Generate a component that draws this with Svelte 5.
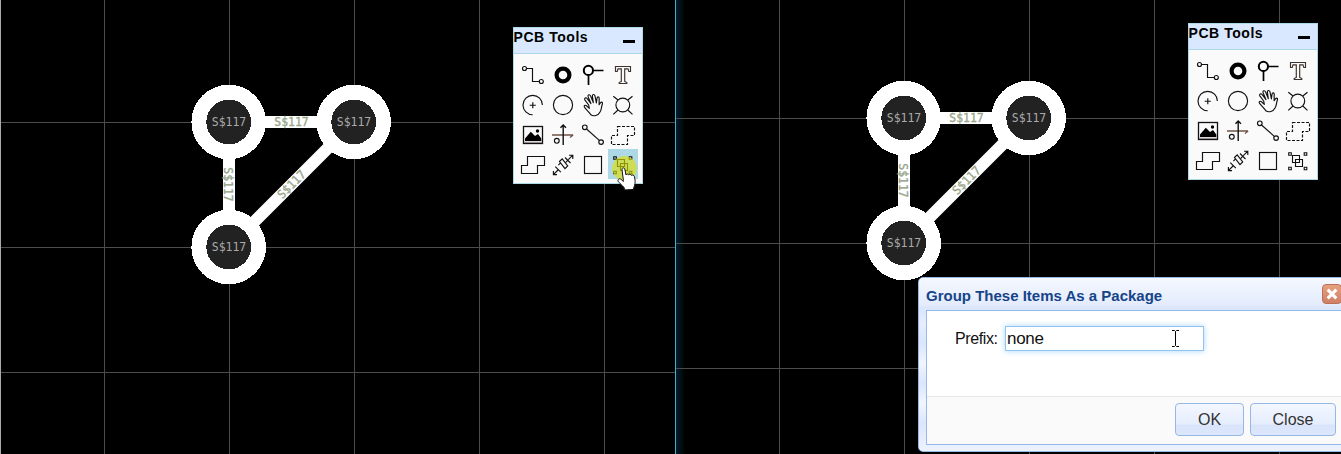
<script>
  const pads = [[229, 122], [354, 122], [229, 247]];
  const traces = [
    { x: 291.5, y: 122, a: 0 },
    { x: 228, y: 184.5, a: 90 },
    { x: 291.5, y: 184.5, a: -45 }
  ];
  const panes = [
    { id: 'before', dy: 0, active: true },
    { id: 'after', dy: -4, active: false }
  ];
  const tools = ['track', 'pad', 'via', 'text', 'arc', 'circle', 'move', 'hole', 'image', 'origin', 'line', 'region', 'solid', 'measure', 'rect', 'group'];
</script>

{#snippet icon(name)}
  <svg class="icon" viewBox="0 0 30 30" fill="none" stroke="#111" stroke-width="1.15">
    {#if name === 'track'}
      <path d="M8.5 9.5H14.5V22.5H21" /><circle cx="6.5" cy="9.5" r="2" /><circle cx="23.3" cy="22.5" r="2" />
    {:else if name === 'pad'}
      <circle cx="15" cy="16" r="6.4" stroke="#000" stroke-width="4.2" />
    {:else if name === 'via'}
      <g stroke="#000" stroke-width="2"><circle cx="10.4" cy="11.4" r="4.6" /><path d="M15 11.5H25.5M10.5 16V26" stroke-width="1.7" /></g>
    {:else if name === 'text'}
      <path stroke="#3d332c" d="M7.5 7.5H22.5V12.5H20.8L20 9.8H16.7V22.5L18.8 23.5V24.5H11.2V23.5L13.3 22.5V9.8H10L9.2 12.5H7.5Z" />
    {:else if name === 'arc'}
      <path d="M24.4 16A9.7 9.7 0 1 0 14.7 25.7M11.7 16.2H17.8M14.8 13.2V19.2" />
    {:else if name === 'circle'}
      <circle cx="15" cy="16" r="9.6" />
    {:else if name === 'move'}
      <path stroke-linejoin="round" d="M12.8 25.7C11.2 23.2 8.8 21.5 6.8 18.7C5.2 16.4 7.2 15.6 8.8 17L11.3 19.3L10.7 16L7 11.1C5.8 8.9 8 8 9.2 9.7L13 14.6L10.2 8C9.4 5.6 11.6 4.9 12.6 7L15.3 13.6L14.4 7.3C14.2 5.1 16.4 4.8 17 7L18.4 13.9L19 9.2C19.4 7.2 21.3 7.6 21.2 9.5L21.1 15.7L22.4 13.9C23.6 12.3 25 13.3 24.3 15.2C23.2 18 23.7 20.5 22.2 22.7C20.2 26.8 15.6 27.7 12.8 25.7Z" />
    {:else if name === 'hole'}
      <circle cx="14.8" cy="16" r="6.9" /><path d="M5.3 7.3L10 11M24.5 7.3L19.8 11M5.3 25.3L10 21M24.5 25.3L19.8 21" />
    {:else if name === 'image'}
      <rect x="5.5" y="7.5" width="19" height="17" stroke-width="1.3" />
      <path fill="#000" stroke="none" d="M7 19.5L12.8 12.8L17 17L20 15L23.3 19.5V22H7Z" /><circle cx="19.5" cy="12" r="1.7" fill="#000" stroke="none" />
      <path d="M6 23.3H24" stroke="#91888c" />
    {:else if name === 'origin'}
      <path stroke="#6f5445" stroke-width="1.3" d="M4 16H25M22 18.5L25.2 16" /><path stroke-width="1.4" d="M15.2 26V6M12.5 8.8L15.2 6L18 8.8" /><circle cx="8.8" cy="21.8" r="2.4" />
    {:else if name === 'line'}
      <path d="M8.5 10L21.3 21.4" /><circle cx="6.8" cy="8.3" r="2.3" /><circle cx="23.1" cy="23.1" r="2.3" />
    {:else if name === 'region'}
      <path stroke-dasharray="3 1.5" d="M9.5 7.5H26.5V16.5H19.5V25.5H3.5V16.5H9.5Z" />
    {:else if name === 'solid'}
      <path d="M9.5 7.5H26.5V16.5H19.5V24.5H3.5V16.5H9.5Z" />
    {:else if name === 'measure'}
      <path d="M5.4 25.6L10 21M20.3 10.7L24.8 6.2M5.4 22V25.6H9M21 6.2H24.8V10M7.3 17.7L12.8 23.2M17 8.5L22.5 14M10.4 16.1L12.3 14.2M17.8 13.4L19.5 11.7M11.5 12.5L14.2 9.8L19.7 17L17 19.7Z" />
    {:else if name === 'rect'}
      <rect x="6.5" y="7.5" width="17" height="17" />
    {:else}
      <path d="M5.7 7.7H8.3V10.3H5.7ZM21.2 7.7H23.8V10.3H21.2ZM5.7 22.2H8.3V24.8H5.7ZM21.2 22.2H23.8V24.8H21.2Z" stroke-width="1.1" />
      <path d="M9.5 10.5H16.5V17.5H9.5ZM12.5 14.5H19.5V21.5H12.5Z" stroke-width="1.1" />
    {/if}
  </svg>
{/snippet}

<main class="workspace">
  {#each panes as pane (pane.id)}
    <section class="pane {pane.id}">
      <svg class="board" width="675" height="454" viewBox={`0 ${-pane.dy} 675 454`}>
        <g stroke="#4c4c4c" stroke-width="1">
          {#each [104.5, 229.5, 354.5, 479.5, 604.5] as x}<path d={`M${x} 0V458`} />{/each}
          {#each [122.5, 247.5, 372.5] as y}<path d={`M0 ${y}H675`} />{/each}
        </g>
        <path d="M354 122H229V247Z" fill="none" stroke="#fff" stroke-width="12" />
        {#each pads as [x, y]}
          <circle cx={x - 0.3} cy={y} r="37.3" fill="#fff" shape-rendering="crispEdges" />
          <circle cx={x - 0.3} cy={y} r="22.4" fill="#222" shape-rendering="crispEdges" />
          <text class="net" {x} y={y + 4} textLength="34.5" lengthAdjust="spacingAndGlyphs">S$117</text>
        {/each}
        {#each traces as t}
          <text class="net trace" transform={`translate(${t.x} ${t.y}) rotate(${t.a})`} y="4" textLength="34.5" lengthAdjust="spacingAndGlyphs">S$117</text>
        {/each}
      </svg>

      <div class="tools">
        <header><span>PCB Tools</span><i></i></header>
        <div class="grid">
          {#each tools as name}
            <button class:active={pane.active && name === 'group'} aria-label={name}>{@render icon(name)}</button>
          {/each}
        </div>
      </div>

      {#if pane.active}
        <svg class="pointer" width="30" height="38" viewBox="0 0 30 38">
          <circle cx="14.5" cy="14.3" r="12.3" fill="#e1e000" opacity=".62" />
          <path fill="#fff" stroke="#111" stroke-width="1" stroke-linejoin="round" d="M13.4 26.3L12 15.6C11.7 13.7 14.2 13.2 14.8 15L16 21C16.5 19.6 18.2 19.7 18.6 20.9C19.3 19.8 20.9 20.2 21.3 21.4C22.1 20.5 24 21 24.4 22.6C25.3 26 25.4 29 24.5 31.5L23.3 35.5L14.8 35.9L14 33.5C12 31 10.5 30 8.5 27.9C7 26 8.8 24 10.8 25.1L13.4 27.5Z" />
        </svg>
      {/if}
    </section>
  {/each}

  <div class="dialog">
    <header><h1>Group These Items As a Package</h1>
      <button class="dismiss" aria-label="Dismiss"><svg width="12" height="12" viewBox="0 0 12 12"><path d="M1.7 1.7L10.3 10.3M10.3 1.7L1.7 10.3" stroke="#fff" stroke-width="3.2" /></svg></button>
    </header>
    <div class="body">
      <div class="form"><label for="prefix">Prefix:</label><input id="prefix" value="none" />
        <svg class="caret" width="9" height="17" viewBox="0 0 9 17"><path d="M1 .5H3.5L4.5 1.5L5.5 .5H8M4.5 1.5V15.5M1 16.5H3.5L4.5 15.5L5.5 16.5H8" fill="none" stroke="#000" /></svg>
      </div>
      <footer><button class="ok">OK</button><button class="close">Close</button></footer>
    </div>
  </div>
</main>

<style>
  :global(body) { margin: 0; background: #000; overflow: hidden; }
  * { box-sizing: border-box; }
  .workspace { position: relative; width: 1341px; height: 454px; display: flex; overflow: hidden; background: #000; font-family: "Liberation Sans", Arial, sans-serif; }
  .pane { position: relative; flex: 0 0 675px; height: 454px; }
  .before { box-shadow: inset 1px 0 #aaa; }
  .after { border-left: 1px solid #4eaacb; background: linear-gradient(90deg, #00202e, #000 9px); }
  .board { display: block; }
  .after .board { margin-left: -1px; clip-path: inset(0 0 0 1px); }
  .before .board { clip-path: inset(0 0 0 1px); }
  .net { font: 12px "DejaVu Sans Mono", monospace; text-anchor: middle; fill: #aaa; }
  .trace { fill: #99a68b; stroke: #99a68b; stroke-width: .35; }

  .tools { position: absolute; left: 513px; top: 27px; width: 130px; height: 157px; border: 1px solid #add8e6; background: #fafafa; }
  .after .tools { left: 512px; top: 23px; }
  .tools header { height: 26px; border-bottom: 1px solid #add8e6; background: #d9e8fe; display: flex; justify-content: space-between; padding: 0 7px 0 0; }
  .tools header span { margin-left: -.5px; font-size: 14px; line-height: 18px; font-weight: bold; letter-spacing: .55px; white-space: nowrap; }
  .tools header i { width: 12px; height: 3px; margin-top: 12px; background: #000; }
  .grid { display: grid; grid-template-columns: repeat(4, 30px); grid-auto-rows: 30px; padding: 5px 4px; }
  .grid button { padding: 0; border: 0; background: none; }
  .grid .active { background: #add8e6; }
  .icon { display: block; width: 30px; height: 30px; }
  .pointer { position: absolute; left: 610px; top: 154px; }

  .dialog { position: absolute; left: 918px; top: 277px; width: 436px; height: 175px; padding: 0 7px 7px; border: 1px solid #95b8e7; border-radius: 5px; background: linear-gradient(#f4f8ff, #e3ebfc 28px, #dbe5fb 29px, #dbe5fb 33px, #e6edfd 45px, #dbe5fb 65px, #f1f5fe 85px, #dbe5fb 105px, #f1f5fe 125px, #dbe5fb 145px, #eef3fe); }
  .dialog header { height: 32px; display: flex; align-items: center; justify-content: space-between; padding: 0 4px 0 0; }
  h1 { margin: 3px 0 0; font-size: 15px; line-height: 18px; font-weight: bold; color: #174489; white-space: nowrap; }
  .dismiss { display: grid; place-items: center; width: 20px; height: 20px; padding: 0; border: 1px solid #bd7058; border-radius: 4px; background: linear-gradient(#e6a17f, #cf8066); }
  .body { height: 135px; border: 1px solid #95b8e7; background: #fff; }
  .form { position: relative; height: 85px; display: flex; align-items: flex-start; padding: 15px 0 0 28px; }
  label { width: 50px; font-size: 16px; line-height: 25px; letter-spacing: -.4px; color: #111; }
  input { width: 199px; height: 25px; padding: 0 1px; border: 1px solid #91c5ef; outline: 0; box-shadow: 0 0 6px #a9d7ff; font: 17px "Liberation Sans", sans-serif; letter-spacing: -.3px; color: #111; }
  .caret { position: absolute; left: 244px; top: 19px; }
  footer { height: 48px; display: flex; gap: 6px; padding: 6px 0 0 248px; border-top: 1px solid #e6e6e6; background: #fafafa; }
  footer button { height: 33px; padding: 0; border: 1px solid #95b8e7; border-radius: 4px; background: linear-gradient(#f3f7ff, #e5edfd 65%, #d9e4fb 68%, #dce6fc); color: #333; font: 16px "Liberation Sans", sans-serif; }
  .ok { width: 69px; }
  .close { width: 86px; }
</style>
